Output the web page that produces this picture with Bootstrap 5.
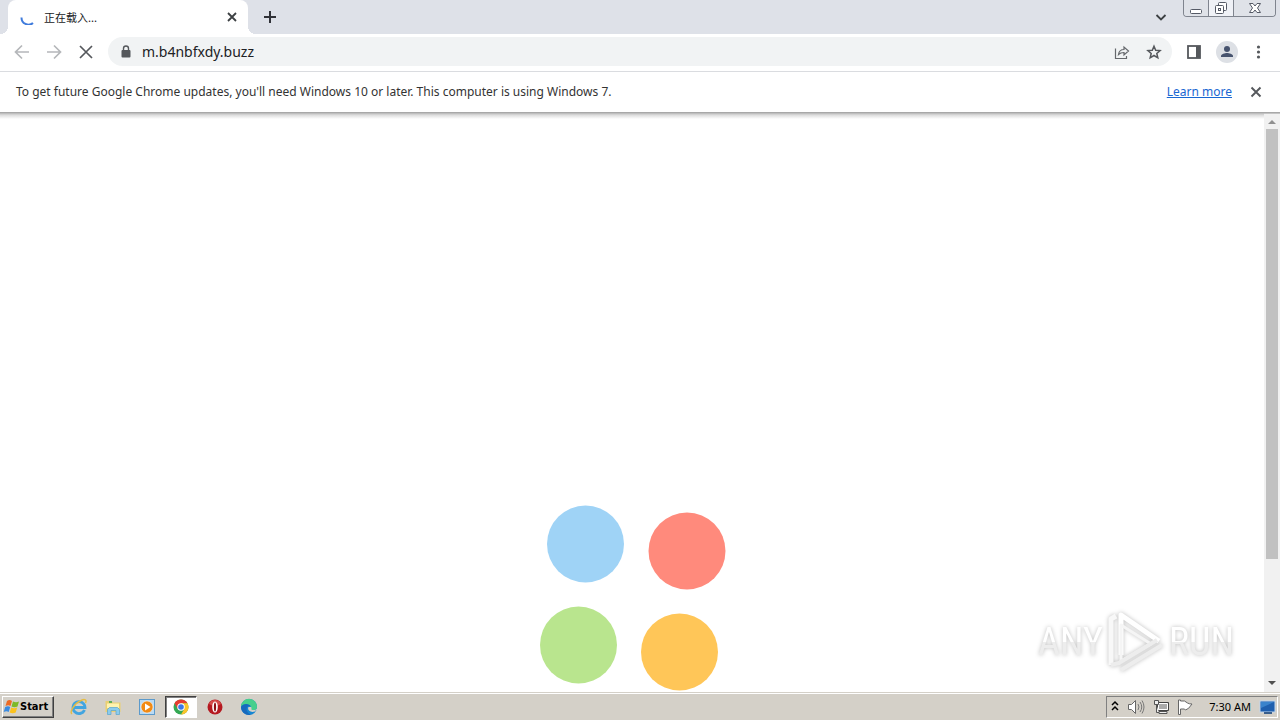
<!DOCTYPE html>
<html lang="en">
<head>
<meta charset="utf-8">
<meta name="viewport" content="width=device-width, initial-scale=1">
<title>正在载入...</title>
<link href="https://cdn.jsdelivr.net/npm/bootstrap@5.3.0/dist/css/bootstrap.min.css" rel="stylesheet">
<style>
  body { font-family: "Noto Sans", "Noto Sans CJK SC", sans-serif; font-size: 12px; line-height: 16px; color: #3c4043; background: #fff; }
  svg { display: block; flex: none; }
  button { font: inherit; color: inherit; }
  .plain { border: 0; background: none; padding: 0; }
  .tabstrip { height: 34px; background: #dee1e8; }
  .browser-tab { width: 240px; margin-left: 8px; padding: 0 10px 0 12px; background: #fff; border-radius: 8px 8px 0 0; }
  .browser-tab::before, .browser-tab::after { content: ""; position: absolute; bottom: 0; width: 8px; height: 8px; }
  .browser-tab::before { left: -8px; background: radial-gradient(circle at 0 0, transparent 8px, #fff 8px); }
  .browser-tab::after { right: -8px; background: radial-gradient(circle at 100% 0, transparent 8px, #fff 8px); }
  .tab-title { font-family: "Noto Sans CJK SC", sans-serif; font-size: 11px; margin-left: 8px; color: #202124; }
  .win-controls { height: 17px; margin-right: 4px; border: 1px solid #7f848e; border-top: 0; border-radius: 0 0 4px 4px; overflow: hidden; }
  .win-controls button { width: 25px; height: 16px; border-right: 1px solid #7f848e; background: #dfe2e8; }
  .win-controls button:nth-child(2) { background: #eff1f6; }
  .win-controls button:last-child { width: 41px; border: 0; }
  .toolbar { height: 38px; padding: 0 14px 2px 12px; border-bottom: 1px solid #dadce0; }
  .nav-buttons { gap: 12px; }
  .tool-icons { gap: 14px; }
  .address { height: 29px; margin-left: 12px; padding: 0 9px; border-radius: 15px; background: #f1f3f4; }
  .address input { font-size: 14px; line-height: 20px; color: #202124; outline: 0; margin-left: 7px; }
  .infobar { height: 41px; padding: 0 16px; border-bottom: 1px solid #a8a8a8; color: #333; }
  .infobar a { color: #1967d2; }
  .page-view { background: linear-gradient(#b4b4b4, #dcdcdc 2px, #fff 6px); }
  .scrollbar { width: 16px; background: #f1f1f1; padding-top: 1px; box-shadow: inset 0 1px #c4c4c4; }
  .thumb { width: 12px; height: 75%; max-height: 430px; background: #c1c1c1; }
  .watermark { right: 46px; bottom: 18px; gap: 4px; font: 400 38px/64px "Roboto Condensed", Roboto, sans-serif; color: #fff; filter: drop-shadow(0 0 2px rgba(0, 0, 0, .26)); }
  .watermark span { background: linear-gradient(#fff 50%, #ededed 50%); background-clip: text; -webkit-background-clip: text; color: transparent; }
  .taskbar { height: 28px; background: #d4d0c8; border-top: 1px solid #d4d0c8; box-shadow: inset 0 1px #fff; color: #000; padding: 2px 2px 2px; font-size: 11px; }
  .start { width: 52px; height: 22px; border: 1px solid; border-color: #fff #404040 #404040 #fff; box-shadow: inset -1px -1px #808080; background: #d4d0c8; padding: 0; font-family: "DejaVu Sans Condensed", "DejaVu Sans", sans-serif; font-weight: 700; font-size: 11px; }
  .quick { margin-left: 9px; gap: 2px; }
  .quick button { width: 32px; height: 22px; }
  .quick .active { border: 1px solid; border-color: #404040 #fff #fff #404040; box-shadow: inset 1px 1px #808080; background: #fff; }
  .tray { height: 22px; padding: 0 0 0 4px; gap: 8px; border: 1px solid; border-color: #808080 #fff #fff #808080; }
  .clock { margin-left: 8px; }
</style>
</head>
<body class="d-flex flex-column vh-100 overflow-hidden">
<header>
  <div class="tabstrip d-flex align-items-stretch">
    <div class="browser-tab position-relative d-flex align-items-center">
      <svg width="16" height="16" viewBox="0 0 16 16"><path d="M1.500 8.500a7 7 0 0 0 11.500 5.500" fill="none" stroke="#3f7bdc" stroke-width="2"/></svg>
      <span class="tab-title">正在载入...</span>
      <button class="plain ms-auto" aria-label="Close tab"><svg width="12" height="12" viewBox="0 0 12 12"><path d="M2 2l8 8M10 2l-8 8" stroke="#3c4043" stroke-width="1.800"/></svg></button>
    </div>
    <button class="plain ms-3" aria-label="New tab"><svg width="12" height="12" viewBox="0 0 12 12"><path d="M6 0v12M0 6h12" stroke="#303238" stroke-width="2"/></svg></button>
    <button class="plain ms-auto me-3" aria-label="Search tabs"><svg width="12" height="12" viewBox="0 0 12 12"><path d="M1.500 4L6 8.500 10.500 4" fill="none" stroke="#3c4043" stroke-width="1.800"/></svg></button>
    <div class="win-controls d-flex">
      <button class="plain" aria-label="Minimize"><svg class="mx-auto" width="14" height="14" viewBox="0 0 14 14"><rect x="1.500" y="8.500" width="11" height="4" rx="1" fill="#fff" stroke="#555a66"/></svg></button>
      <button class="plain" aria-label="Restore"><svg class="mx-auto" width="14" height="16" viewBox="0 0 14 16"><g fill="#fff" stroke="#555a66"><rect x="4.500" y="2.500" width="8" height="8" rx="1"/><rect x="1.500" y="5.500" width="8" height="8" rx="1"/><rect x="4.500" y="8.500" width="2" height="2"/></g></svg></button>
      <button class="plain" aria-label="Close"><svg class="mx-auto" width="14" height="16" viewBox="0 0 14 16"><path d="M1.500 3.500h3.500l2 2.500 2-2.500h3.500L9.500 8l3 4.500H9l-2-2.500-2 2.500H1.500l3-4.500z" fill="#fff" stroke="#555a66"/></svg></button>
    </div>
  </div>
  <div class="toolbar d-flex align-items-center">
    <div class="nav-buttons d-flex">
      <button class="plain" aria-label="Back"><svg width="20" height="20" viewBox="0 0 20 20"><path d="M17 10H4M10 3.500L3.500 10l6.500 6.500" fill="none" stroke="#b5b7ba" stroke-width="1.700"/></svg></button>
      <button class="plain" aria-label="Forward"><svg width="20" height="20" viewBox="0 0 20 20"><path d="M3 10h13M10 3.500l6.500 6.500-6.500 6.500" fill="none" stroke="#b5b7ba" stroke-width="1.700"/></svg></button>
      <button class="plain" aria-label="Stop loading"><svg width="20" height="20" viewBox="0 0 20 20"><path d="M4 4l12 12M16 4L4 16" stroke="#55585c" stroke-width="1.700"/></svg></button>
    </div>
    <div class="tool-icons d-flex align-items-center flex-grow-1">
      <div class="address tool-icons d-flex align-items-center flex-grow-1">
        <label class="d-flex align-items-center flex-grow-1">
          <svg width="18" height="18" viewBox="0 0 18 18"><rect x="4.500" y="7" width="9" height="7.500" rx="1" fill="#55585c"/><path d="M6.500 8V5.500a2.500 2.500 0 0 1 5 0V8" fill="none" stroke="#55585c" stroke-width="1.400"/></svg>
          <input class="plain flex-grow-1" type="text" aria-label="Address" value="m.b4nbfxdy.buzz">
        </label>
        <button class="plain" aria-label="Share"><svg width="18" height="18" viewBox="0 0 18 18"><path d="M2.500 5.500v10h11V13M5.500 11.500c.5-3.500 2.500-5 5.500-5V4l4.500 4L11 12V9.500c-2.500 0-4 .5-5.500 2z" fill="none" stroke="#65686c" stroke-width="1.200"/></svg></button>
        <button class="plain" aria-label="Bookmark"><svg width="18" height="18" viewBox="0 0 18 18"><path d="M9 3.200l1.700 4 4.400.4-3.300 2.900 1 4.300L9 12.500l-3.800 2.300 1-4.300-3.300-2.900 4.400-.4z" fill="none" stroke="#55585c" stroke-width="1.500"/></svg></button>
      </div>
      <button class="plain" aria-label="Side panel"><svg width="16" height="14" viewBox="0 0 16 14"><rect x="2" y="1" width="12" height="12" fill="#fff" stroke="#55585c" stroke-width="1.800"/><path d="M10 1h4v12h-4z" fill="#55585c"/></svg></button>
      <button class="plain" aria-label="Profile"><svg width="22" height="22" viewBox="0 0 22 22"><circle cx="11" cy="11" r="11" fill="#dde0e5"/><circle cx="11" cy="8" r="3" fill="#47536e"/><path d="M5 16v-1c0-2 4-3 6-3s6 1 6 3v1z" fill="#47536e"/></svg></button>
      <button class="plain" aria-label="Menu"><svg width="14" height="16" viewBox="0 0 14 16" fill="#55585c"><circle cx="6.500" cy="3" r="1.600"/><circle cx="6.500" cy="8" r="1.600"/><circle cx="6.500" cy="13" r="1.600"/></svg></button>
    </div>
  </div>
  <div class="infobar d-flex align-items-center">
    <span>To get future Google Chrome updates, you'll need Windows 10 or later. This computer is using Windows 7.</span>
    <a class="ms-auto" href="#">Learn more</a>
    <button class="plain ms-3" aria-label="Dismiss"><svg width="16" height="16" viewBox="0 0 16 16"><path d="M3.500 3.500l9 9M12.500 3.500l-9 9" stroke="#55585c" stroke-width="1.900"/></svg></button>
  </div>
</header>
<main class="page-view d-flex flex-grow-1 position-relative overflow-hidden">
  <div class="flex-grow-1 d-flex align-items-end justify-content-center">
    <svg width="188" height="188" viewBox="0 0 188 188" role="img" aria-label="Loading"><circle cx="47.500" cy="40" r="38.500" fill="#9fd3f6"/><circle cx="149" cy="47" r="38.500" fill="#ff8a7c"/><circle cx="40.500" cy="141" r="38.500" fill="#b9e58e"/><circle cx="141.500" cy="148" r="38.500" fill="#ffc658"/></svg>
  </div>
  <div class="scrollbar d-flex flex-column align-items-center">
    <svg width="16" height="15" viewBox="0 0 16 15"><path d="M4 10l4-4 4 4z" fill="#909090"/></svg>
    <div class="thumb"></div>
    <svg class="mt-auto" width="16" height="17" viewBox="0 0 16 17"><path d="M4 6h8l-4 4z" fill="#505050"/></svg>
  </div>
  <div class="watermark position-absolute d-flex align-items-center">
    <span>ANY</span>
    <svg width="58" height="64" viewBox="0 0 58 64" fill="none" stroke-width="5" stroke-linejoin="round"><path d="M4 55V9l5-3" stroke="#f8f8f8"/><path d="M14 45V5l38 26" stroke="#fff"/><path d="M14 15l30 19-30 17z" stroke="#f5f5f5" stroke-width="3"/><path d="M4 55l8-2 38-23M14 60l41-25" stroke="#ededed" stroke-width="4"/></svg>
    <span>RUN</span>
  </div>
</main>
<footer class="taskbar d-flex align-items-center">
  <button class="start d-flex align-items-center">
    <svg width="17" height="18" viewBox="0 0 17 18"><path d="M4 3c2-1.500 3.500-1 5 0L7.500 8c-1.500-1-3-1-5 0z" fill="#ee6b24"/><path d="M10 3.500c2 1 4 1 6 0L14.500 8.500c-2 1-4 1-6 0z" fill="#7db928"/><path d="M2.200 9c2-1 3.500-1 5 0L5.700 14c-1.500-1-3-1-5 0z" fill="#3b8be0"/><path d="M8.200 9.500c2 1 4 1 6 0L12.700 14.500c-2 1-4 1-6 0z" fill="#fbc21d"/></svg>
    Start
  </button>
  <nav class="quick d-flex" aria-label="Taskbar">
    <button class="plain" aria-label="Internet Explorer"><svg class="mx-auto" width="18" height="18" viewBox="0 0 18 18"><path d="M14.500 12A6 6 0 1 1 15 9.500H4.500" fill="none" stroke="#42a5e0" stroke-width="2.800"/><path d="M2 16C-1 14 5 5 11 2.500c4-2 6-.5 4.500 2.500" fill="none" stroke="#e5bc45" stroke-width="1.400"/></svg></button>
    <button class="plain" aria-label="File Explorer"><svg class="mx-auto" width="18" height="18" viewBox="0 0 18 18"><path d="M1.500 3h6L9 4.500h7.500V14h-15z" fill="#e9cf73"/><path d="M3 5.500h12V10H3z" fill="#fff3b0"/><path d="M5 3h3v2H5z" fill="#62ad58"/><path d="M3.500 16.500v-5l2-2h8l2 2v5h-3.500v-4H7v4z" fill="#8bcbed" stroke="#58a5ce" stroke-width=".7"/></svg></button>
    <button class="plain" aria-label="Media Player"><svg class="mx-auto" width="18" height="18" viewBox="0 0 18 18"><rect x="1.500" y="1.500" width="15" height="15" fill="#b9daf4" stroke="#5c9acb"/><circle cx="9" cy="9" r="6" fill="#f18a15" stroke="#fff" stroke-width=".5"/><path d="M7 5.500v7L12.500 9z" fill="#fff"/></svg></button>
    <button class="plain active" aria-label="Chrome"><svg class="mx-auto" width="16" height="16" viewBox="0 0 16 16"><circle cx="8" cy="8" r="7.500" fill="#34a853"/><path d="M1.500 4.250a7.500 7.500 0 0 1 13 0H8L4.750 9.900z" fill="#e63c30"/><path d="M14.500 4.250A7.500 7.500 0 0 1 8 15.500l3.250-5.600L8 4.250z" fill="#fcc42b"/><circle cx="8" cy="8" r="3.750" fill="#fff"/><circle cx="8" cy="8" r="2.800" fill="#3b78e7"/></svg></button>
    <button class="plain" aria-label="Opera"><svg class="mx-auto" width="16" height="16" viewBox="0 0 16 16"><circle cx="8" cy="8" r="7.500" fill="#b51920"/><path d="M2 5a6.500 6.500 0 0 1 12 0L8 8z" fill="#d54b4b"/><ellipse cx="8" cy="8" rx="2.800" ry="5.500" fill="#fff"/><ellipse cx="8" cy="8" rx="1.100" ry="4.500" fill="#8c0d13"/></svg></button>
    <button class="plain" aria-label="Edge"><svg class="mx-auto" width="18" height="18" viewBox="0 0 18 18"><circle cx="9" cy="9" r="8" fill="#1686d3"/><path d="M1 8.500A8 8 0 0 1 17 9c0 3-3 4-5.500 3C10 11.500 11.500 10.500 11 9 10 6 4 5 1 8.500z" fill="#46cf8d"/><path d="M1 9c2-4 8-4 10-.5C8 7 5 10 7.500 14c1 1.500 2 2 3.500 2.700A8 8 0 0 1 1 9z" fill="#1769bd"/><path d="M8.500 9c-1.500 3 1.500 6 6.500 4.500l1-1.500h2v-2l-2 1.500c-1.500 1-4 .5-4.500 0-.5-.5.500-1-.3-2.500z" fill="#d4d0c8"/></svg></button>
  </nav>
  <div class="tray d-flex align-items-center ms-auto">
    <button class="plain" aria-label="Show hidden icons"><svg width="8" height="14" viewBox="0 0 8 14"><path d="M1 5l3-3 3 3M1 10l3-3 3 3" fill="none" stroke="#000" stroke-width="1.500"/></svg></button>
    <button class="plain" aria-label="Volume"><svg width="18" height="16" viewBox="0 0 18 16"><path d="M1.500 5.500h3l4-4v13l-4-4h-3z" fill="#fff" stroke="#666"/><path d="M11 5q2 3 0 6M13 3q3.500 5 0 10M15 1.500q4 6.500 0 13" fill="none" stroke="#777"/></svg></button>
    <button class="plain" aria-label="Network"><svg width="16" height="16" viewBox="0 0 16 16"><path d="M4.500 3.500h11v8h-11z" fill="#aaa" stroke="#444"/><path d="M5.500 4.500h9v6h-9z" fill="none" stroke="#fff"/><path d="M1.500 1.500h4v4h-4zM3.500 6v7.500H6M6 14.500h8v-2H6z" fill="#eee" stroke="#555"/></svg></button>
    <button class="plain" aria-label="Action Center"><svg width="16" height="16" viewBox="0 0 16 16"><path d="M1.500 1v14.500h2V10h4l1 1q3-.5 6.500-6-3 0-4.500-1-1.500-1-3-2h-4V1z" fill="#fff" stroke="#666"/></svg></button>
    <span class="clock">7:30 AM</span>
    <button class="plain" aria-label="Show desktop"><svg width="18" height="16" viewBox="0 0 18 16"><rect x="1" y="2" width="15" height="11" fill="#1f5fae" stroke="#c0d6ed"/><path d="M2 3h13L2 9z" fill="#3a83cc"/><path d="M5 14h8" stroke="#3a5f8c" stroke-width="2"/></svg></button>
  </div>
</footer>
<script src="https://cdn.jsdelivr.net/npm/bootstrap@5.3.0/dist/js/bootstrap.bundle.min.js"></script>
</body>
</html>
